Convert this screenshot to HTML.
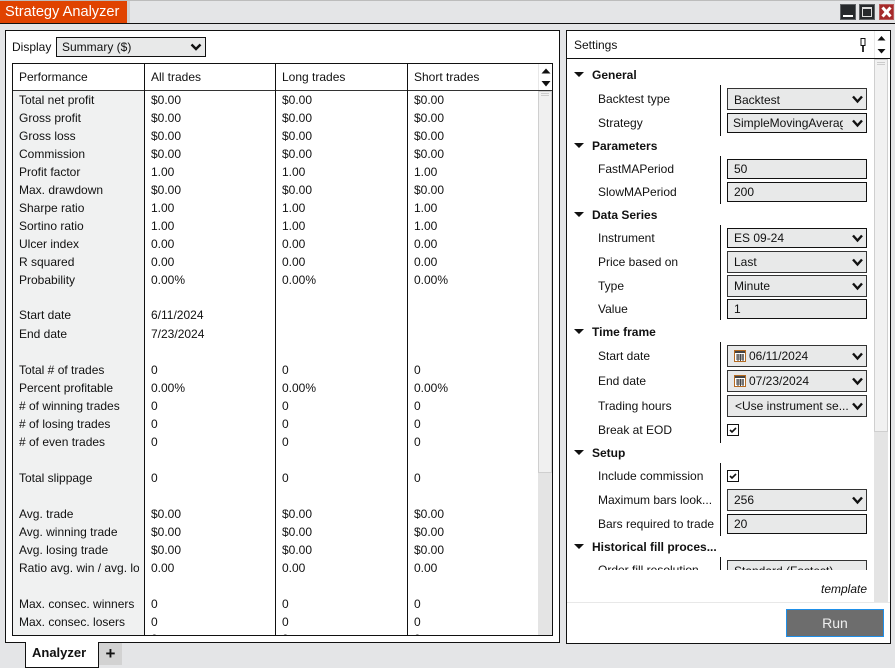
<!DOCTYPE html>
<html><head><meta charset="utf-8"><style>
html,body{margin:0;padding:0}
body{width:895px;height:668px;position:relative;overflow:hidden;background:#e4e5e7;font:12px/14px "Liberation Sans",sans-serif;color:#111}
div,span{position:absolute;box-sizing:border-box}
.r{white-space:nowrap;height:14px}
.h{font-weight:bold;left:592px;white-space:nowrap;font-size:12px}
.l{left:598px;white-space:nowrap}
.c{left:727px;width:140px;background:#e8e9e9;border:1px solid #111;padding:3px 0 0 6px;white-space:nowrap;overflow:hidden}
.g{border-color:#333}
.v{position:absolute;left:720px;width:1px;background:#111}
svg{position:absolute}
</style></head><body>
<div style="left:0;top:0;width:895px;height:1px;background:#bcbcbc"></div>
<div style="left:127px;top:1px;width:3px;height:22px;background:#d0d0d0"></div>
<div style="left:0;top:1px;width:127px;height:22px;background:#e04300;color:#fff;font-size:14.6px;line-height:22px;padding-left:5px;white-space:nowrap">Strategy Analyzer</div>
<div style="left:0;top:23px;width:895px;height:1px;background:#111"></div>
<div style="left:840px;top:4px;width:16px;height:16px;background:#26292c;border:1px solid #5f6265"><div style="left:2px;top:10px;width:10px;height:2px;background:#fff"></div></div>
<div style="left:859px;top:4px;width:16px;height:16px;background:#26292c;border:1px solid #5f6265"><div style="left:2px;top:2px;width:10px;height:10px;border:1px solid #ddd;border-top-width:2px"></div></div>
<div style="left:879px;top:4px;width:15px;height:16px;background:#a52a2a;border:1px solid #b85a5a"><svg width="13" height="14"><path d="M2.5 2.5L10.500 11.500M10.500 2.500L2.500 11.500" stroke="#fff" stroke-width="3"/></svg></div>

<!-- left panel -->
<div style="left:5px;top:30px;width:555px;height:613px;background:#fff;border:1px solid #111"></div>
<div class="r" style="left:12px;top:40px">Display</div>
<div style="left:56px;top:37px;width:150px;height:20px;background:#e8e9e9;border:1px solid #111;padding:2px 0 0 5px">Summary ($)</div>
<svg style="left:190px;top:43px" width="12" height="8"><path d="M1.500 1.500L6 6L10.500 1.500" fill="none" stroke="#111" stroke-width="2.400"/></svg>

<div style="left:12px;top:63px;width:541px;height:573px;border:1px solid #111;overflow:hidden;background:#fff">
 <div style="left:0;top:27px;width:131px;height:545px;background:#f0f1f1"></div>
 <div style="left:0;top:26px;width:539px;height:1px;background:#333"></div>
 <div style="left:131px;top:0;width:1px;height:572px;background:#111"></div>
 <div style="left:262px;top:0;width:1px;height:572px;background:#111"></div>
 <div style="left:394px;top:0;width:1px;height:572px;background:#111"></div>
 <div style="left:525px;top:0;width:1px;height:26px;background:#e8e8e8"></div>
 <div style="left:525px;top:27px;width:14px;height:544px;background:#e4e4e4"></div>
 <div style="left:525px;top:27px;width:14px;height:382px;background:#f0f0f0;border:1px solid #cfcfcf"></div>
 <div style="left:528px;top:29px;width:8px;height:1px;background:#ccc"></div>
 <div style="left:528px;top:31px;width:8px;height:1px;background:#ccc"></div>
 <svg style="left:528px;top:3px" width="11" height="22"><path d="M0.500 6.500L5 1.500L9.500 6.500ZM0.500 14L9.500 14L5 19.500Z" fill="#111"/></svg>
</div>
<div style="left:13px;top:64px;width:525px;height:571px">
<span class="r" style="left:6px;top:6px">Performance</span><span class="r" style="left:138px;top:6px">All trades</span><span class="r" style="left:269px;top:6px">Long trades</span><span class="r" style="left:401px;top:6px">Short trades</span>
</div>
<div style="left:13px;top:64px;width:525px;height:571px;overflow:hidden">
<span class="r" style="left:6px;top:29px">Total net profit</span><span class="r" style="left:138px;top:29px">$0.00</span><span class="r" style="left:269px;top:29px">$0.00</span><span class="r" style="left:401px;top:29px">$0.00</span>
<span class="r" style="left:6px;top:47px">Gross profit</span><span class="r" style="left:138px;top:47px">$0.00</span><span class="r" style="left:269px;top:47px">$0.00</span><span class="r" style="left:401px;top:47px">$0.00</span>
<span class="r" style="left:6px;top:65px">Gross loss</span><span class="r" style="left:138px;top:65px">$0.00</span><span class="r" style="left:269px;top:65px">$0.00</span><span class="r" style="left:401px;top:65px">$0.00</span>
<span class="r" style="left:6px;top:83px">Commission</span><span class="r" style="left:138px;top:83px">$0.00</span><span class="r" style="left:269px;top:83px">$0.00</span><span class="r" style="left:401px;top:83px">$0.00</span>
<span class="r" style="left:6px;top:101px">Profit factor</span><span class="r" style="left:138px;top:101px">1.00</span><span class="r" style="left:269px;top:101px">1.00</span><span class="r" style="left:401px;top:101px">1.00</span>
<span class="r" style="left:6px;top:119px">Max. drawdown</span><span class="r" style="left:138px;top:119px">$0.00</span><span class="r" style="left:269px;top:119px">$0.00</span><span class="r" style="left:401px;top:119px">$0.00</span>
<span class="r" style="left:6px;top:137px">Sharpe ratio</span><span class="r" style="left:138px;top:137px">1.00</span><span class="r" style="left:269px;top:137px">1.00</span><span class="r" style="left:401px;top:137px">1.00</span>
<span class="r" style="left:6px;top:155px">Sortino ratio</span><span class="r" style="left:138px;top:155px">1.00</span><span class="r" style="left:269px;top:155px">1.00</span><span class="r" style="left:401px;top:155px">1.00</span>
<span class="r" style="left:6px;top:173px">Ulcer index</span><span class="r" style="left:138px;top:173px">0.00</span><span class="r" style="left:269px;top:173px">0.00</span><span class="r" style="left:401px;top:173px">0.00</span>
<span class="r" style="left:6px;top:191px">R squared</span><span class="r" style="left:138px;top:191px">0.00</span><span class="r" style="left:269px;top:191px">0.00</span><span class="r" style="left:401px;top:191px">0.00</span>
<span class="r" style="left:6px;top:209px">Probability</span><span class="r" style="left:138px;top:209px">0.00%</span><span class="r" style="left:269px;top:209px">0.00%</span><span class="r" style="left:401px;top:209px">0.00%</span>
<span class="r" style="left:6px;top:244px">Start date</span><span class="r" style="left:138px;top:244px">6/11/2024</span>
<span class="r" style="left:6px;top:263px">End date</span><span class="r" style="left:138px;top:263px">7/23/2024</span>
<span class="r" style="left:6px;top:299px">Total # of trades</span><span class="r" style="left:138px;top:299px">0</span><span class="r" style="left:269px;top:299px">0</span><span class="r" style="left:401px;top:299px">0</span>
<span class="r" style="left:6px;top:317px">Percent profitable</span><span class="r" style="left:138px;top:317px">0.00%</span><span class="r" style="left:269px;top:317px">0.00%</span><span class="r" style="left:401px;top:317px">0.00%</span>
<span class="r" style="left:6px;top:335px"># of winning trades</span><span class="r" style="left:138px;top:335px">0</span><span class="r" style="left:269px;top:335px">0</span><span class="r" style="left:401px;top:335px">0</span>
<span class="r" style="left:6px;top:353px"># of losing trades</span><span class="r" style="left:138px;top:353px">0</span><span class="r" style="left:269px;top:353px">0</span><span class="r" style="left:401px;top:353px">0</span>
<span class="r" style="left:6px;top:371px"># of even trades</span><span class="r" style="left:138px;top:371px">0</span><span class="r" style="left:269px;top:371px">0</span><span class="r" style="left:401px;top:371px">0</span>
<span class="r" style="left:6px;top:407px">Total slippage</span><span class="r" style="left:138px;top:407px">0</span><span class="r" style="left:269px;top:407px">0</span><span class="r" style="left:401px;top:407px">0</span>
<span class="r" style="left:6px;top:443px">Avg. trade</span><span class="r" style="left:138px;top:443px">$0.00</span><span class="r" style="left:269px;top:443px">$0.00</span><span class="r" style="left:401px;top:443px">$0.00</span>
<span class="r" style="left:6px;top:461px">Avg. winning trade</span><span class="r" style="left:138px;top:461px">$0.00</span><span class="r" style="left:269px;top:461px">$0.00</span><span class="r" style="left:401px;top:461px">$0.00</span>
<span class="r" style="left:6px;top:479px">Avg. losing trade</span><span class="r" style="left:138px;top:479px">$0.00</span><span class="r" style="left:269px;top:479px">$0.00</span><span class="r" style="left:401px;top:479px">$0.00</span>
<span class="r" style="left:6px;top:497px;width:120px;overflow:hidden">Ratio avg. win / avg. loss</span><span class="r" style="left:138px;top:497px">0.00</span><span class="r" style="left:269px;top:497px">0.00</span><span class="r" style="left:401px;top:497px">0.00</span>
<span class="r" style="left:6px;top:533px">Max. consec. winners</span><span class="r" style="left:138px;top:533px">0</span><span class="r" style="left:269px;top:533px">0</span><span class="r" style="left:401px;top:533px">0</span>
<span class="r" style="left:6px;top:551px">Max. consec. losers</span><span class="r" style="left:138px;top:551px">0</span><span class="r" style="left:269px;top:551px">0</span><span class="r" style="left:401px;top:551px">0</span>
<span class="r" style="left:138px;top:568px">0</span><span class="r" style="left:269px;top:568px">0</span><span class="r" style="left:401px;top:568px">0</span>
</div>

<!-- settings panel -->
<div style="left:566px;top:30px;width:325px;height:614px;background:#fff;border:1px solid #111"></div>
<div class="r" style="left:574px;top:38px">Settings</div>
<div style="left:567px;top:58px;width:323px;height:1px;background:#111"></div>
<div style="left:874px;top:31px;width:1px;height:27px;background:#e8e8e8"></div>
<svg style="left:858px;top:37px" width="10" height="16"><path d="M3 1.500H7V8.500H3Z" fill="#fff" stroke="#111"/><path d="M5 9V15" fill="none" stroke="#333" stroke-width="2"/></svg>
<svg style="left:877px;top:35px" width="11" height="20"><path d="M0.500 5.500L4.500 1L8.500 5.500ZM0.500 14L8.500 14L4.500 18.500Z" fill="#111"/></svg>
<div style="left:874px;top:59px;width:14px;height:543px;background:#e4e4e4"></div>
<div style="left:874px;top:59px;width:14px;height:373px;background:#f1f1f1;border:1px solid #cfcfcf"></div>
<div style="left:877px;top:62px;width:8px;height:1px;background:#ccc"></div>
<div style="left:877px;top:64px;width:8px;height:1px;background:#ccc"></div>

<svg style="left:574px;top:60px" width="12" height="500" fill="#111"><path d="M0 12H10L5 17ZM0 83H10L5 88ZM0 152H10L5 157ZM0 269H10L5 274ZM0 390H10L5 395ZM0 484H10L5 489Z"/></svg>
<div class="h r" style="top:68px">General</div>
<div class="h r" style="top:139px">Parameters</div>
<div class="h r" style="top:208px">Data Series</div>
<div class="h r" style="top:325px">Time frame</div>
<div class="h r" style="top:446px">Setup</div>
<div class="h r" style="top:540px">Historical fill proces...</div>

<div class="v" style="top:85px;height:51px"></div>
<div class="v" style="top:156px;height:48px"></div>
<div class="v" style="top:225px;height:95px"></div>
<div class="v" style="top:342px;height:101px"></div>
<div class="v" style="top:463px;height:73px"></div>
<div class="v" style="top:557px;height:13px"></div>

<div class="l r" style="top:92px">Backtest type</div>
<div class="l r" style="top:116px">Strategy</div>
<div class="l r" style="top:162px">FastMAPeriod</div>
<div class="l r" style="top:185px">SlowMAPeriod</div>
<div class="l r" style="top:231px">Instrument</div>
<div class="l r" style="top:255px">Price based on</div>
<div class="l r" style="top:279px">Type</div>
<div class="l r" style="top:302px">Value</div>
<div class="l r" style="top:349px">Start date</div>
<div class="l r" style="top:374px">End date</div>
<div class="l r" style="top:399px">Trading hours</div>
<div class="l r" style="top:423px">Break at EOD</div>
<div class="l r" style="top:469px">Include commission</div>
<div class="l r" style="top:493px">Maximum bars look...</div>
<div class="l r" style="top:517px">Bars required to trade</div>

<div class="c g" style="top:88px;height:22px;padding-top:4px">Backtest</div>
<div class="c" style="top:113px;height:20px;padding:2px 0 0 5px"><span class="r" style="left:5px;top:2px;width:110px;overflow:hidden">SimpleMovingAverage</span></div>
<div class="c" style="top:159px;height:20px;padding-top:2px">50</div>
<div class="c" style="top:182px;height:20px;padding-top:2px">200</div>
<div class="c" style="top:228px;height:20px;padding-top:2px">ES 09-24</div>
<div class="c g" style="top:251px;height:22px;padding-top:3px">Last</div>
<div class="c g" style="top:275px;height:22px;padding-top:3px">Minute</div>
<div class="c" style="top:299px;height:20px;padding-top:2px">1</div>
<div class="c g" style="top:345px;height:22px;padding:3px 0 0 21px">06/11/2024</div>
<div class="c g" style="top:370px;height:22px;padding:3px 0 0 21px">07/23/2024</div>
<div class="c g" style="top:395px;height:22px;padding:3px 0 0 7px">&lt;Use instrument se...</div>
<div class="c g" style="top:489px;height:22px;padding-top:3px">256</div>
<div class="c" style="top:514px;height:20px;padding-top:2px">20</div>
<div class="c g" style="top:560px;height:22px;padding-top:3px">Standard (Fastest)</div>
<div class="l r" style="top:563px">Order fill resolution</div>
<div style="left:568px;top:570px;width:306px;height:32px;background:#fff"></div>

<svg style="left:852px;top:95px" width="14" height="9"><path d="M1 1.500L5.500 6.500L10 1.500" fill="none" stroke="#111" stroke-width="2.400"/></svg>
<svg style="left:852px;top:119px" width="14" height="9"><path d="M1 1.500L5.500 6.500L10 1.500" fill="none" stroke="#111" stroke-width="2.400"/></svg>
<svg style="left:852px;top:234px" width="14" height="9"><path d="M1 1.500L5.500 6.500L10 1.500" fill="none" stroke="#111" stroke-width="2.400"/></svg>
<svg style="left:852px;top:258px" width="14" height="9"><path d="M1 1.500L5.500 6.500L10 1.500" fill="none" stroke="#111" stroke-width="2.400"/></svg>
<svg style="left:852px;top:282px" width="14" height="9"><path d="M1 1.500L5.500 6.500L10 1.500" fill="none" stroke="#111" stroke-width="2.400"/></svg>
<svg style="left:852px;top:352px" width="14" height="9"><path d="M1 1.500L5.500 6.500L10 1.500" fill="none" stroke="#111" stroke-width="2.400"/></svg>
<svg style="left:852px;top:377px" width="14" height="9"><path d="M1 1.500L5.500 6.500L10 1.500" fill="none" stroke="#111" stroke-width="2.400"/></svg>
<svg style="left:852px;top:402px" width="14" height="9"><path d="M1 1.500L5.500 6.500L10 1.500" fill="none" stroke="#111" stroke-width="2.400"/></svg>
<svg style="left:852px;top:496px" width="14" height="9"><path d="M1 1.500L5.500 6.500L10 1.500" fill="none" stroke="#111" stroke-width="2.400"/></svg>

<svg style="left:734px;top:350px" width="12" height="12"><rect x="0.500" y="0.500" width="11" height="11" fill="#fff" stroke="#b56a20"/><rect x="1" y="1" width="10" height="2" fill="#444"/><path d="M2 5H10M2 7H10M2 9H10M4 4V11M6.500 4V11M9 4V11" stroke="#444" stroke-width="1"/></svg>
<svg style="left:734px;top:375px" width="12" height="12"><rect x="0.500" y="0.500" width="11" height="11" fill="#fff" stroke="#b56a20"/><rect x="1" y="1" width="10" height="2" fill="#444"/><path d="M2 5H10M2 7H10M2 9H10M4 4V11M6.500 4V11M9 4V11" stroke="#444" stroke-width="1"/></svg>

<div style="left:727px;top:424px;width:12px;height:12px;border:1px solid #111;background:#fff"><svg width="10" height="10"><path d="M2 5L4 7L8 3" fill="none" stroke="#111" stroke-width="1.600"/></svg></div>
<div style="left:727px;top:470px;width:12px;height:12px;border:1px solid #111;background:#fff"><svg width="10" height="10"><path d="M2 5L4 7L8 3" fill="none" stroke="#111" stroke-width="1.600"/></svg></div>

<div class="r" style="left:821px;top:582px;font-style:italic">template</div>
<div style="left:567px;top:602px;width:323px;height:1px;background:#e8e8e8"></div>
<div style="left:786px;top:609px;width:98px;height:28px;background:#6d6d6d;border:1px solid #1f8fe8;color:#eee;font-size:14px;line-height:26px;text-align:center">Run</div>

<!-- tabs -->
<div style="left:99px;top:643px;width:23px;height:22px;background:#d2d2d2;font-weight:bold;font-size:17px;line-height:22px;text-align:center;color:#111">+</div>
<div style="left:25px;top:642px;width:74px;height:26px;background:#fff;border:1px solid #111;border-top:0;font-weight:bold;font-size:13px;line-height:21px;padding-left:6px">Analyzer</div>
</body></html>
